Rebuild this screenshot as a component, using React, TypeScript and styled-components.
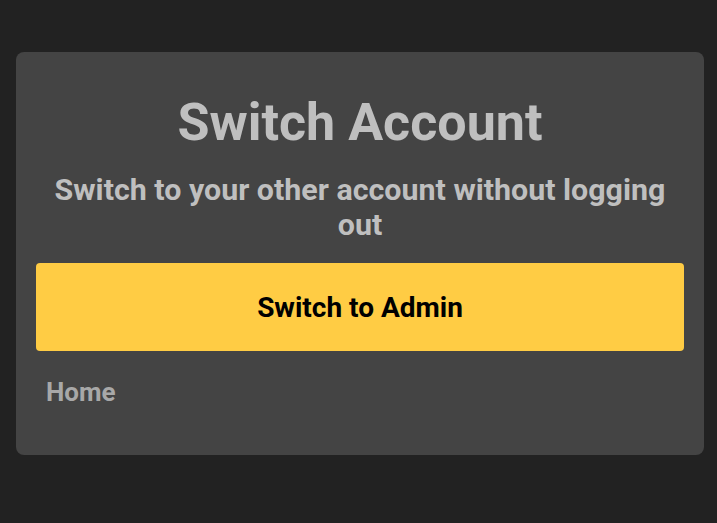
import React from "react";
import styled, { createGlobalStyle } from "styled-components";

const Global = createGlobalStyle`
  html, body { margin: 0; padding: 0; background: #222222; }
  body { font-family: Roboto, "Noto Sans", sans-serif; }
`;

const Page = styled.div`
  padding: 52px 13px 0 16px;
`;

const Card = styled.div`
  background: #444444;
  border-radius: 8px;
  padding: 31px 20px 48px;
  display: flex;
  flex-direction: column;
`;

const Title = styled.h1`
  margin: 0;
  text-align: center;
  color: #bfbfbf;
  font-size: 52px;
  font-weight: 700;
  line-height: 80px;
`;

const Subtitle = styled.p`
  margin: 9px 0 0;
  text-align: center;
  color: #bfbfbf;
  font-size: 30.4px;
  font-weight: 700;
  line-height: 35px;
`;

const SwitchButton = styled.button`
  margin-top: 21px;
  height: 88px;
  border: none;
  border-radius: 4px;
  background: #ffcc44;
  color: #000;
  font-family: inherit;
  font-size: 28px;
  font-weight: 700;
  cursor: pointer;
`;

const HomeLink = styled.a`
  margin-top: 26px;
  padding-left: 10px;
  color: #a8a8a8;
  font-size: 26px;
  font-weight: 700;
  text-decoration: none;
  line-height: 30px;
`;

export default function App() {
  return (
    <>
      <Global />
      <Page>
        <Card>
          <Title>Switch Account</Title>
          <Subtitle>Switch to your other account without logging out</Subtitle>
          <SwitchButton>Switch to Admin</SwitchButton>
          <HomeLink href="#">Home</HomeLink>
        </Card>
      </Page>
    </>
  );
}
